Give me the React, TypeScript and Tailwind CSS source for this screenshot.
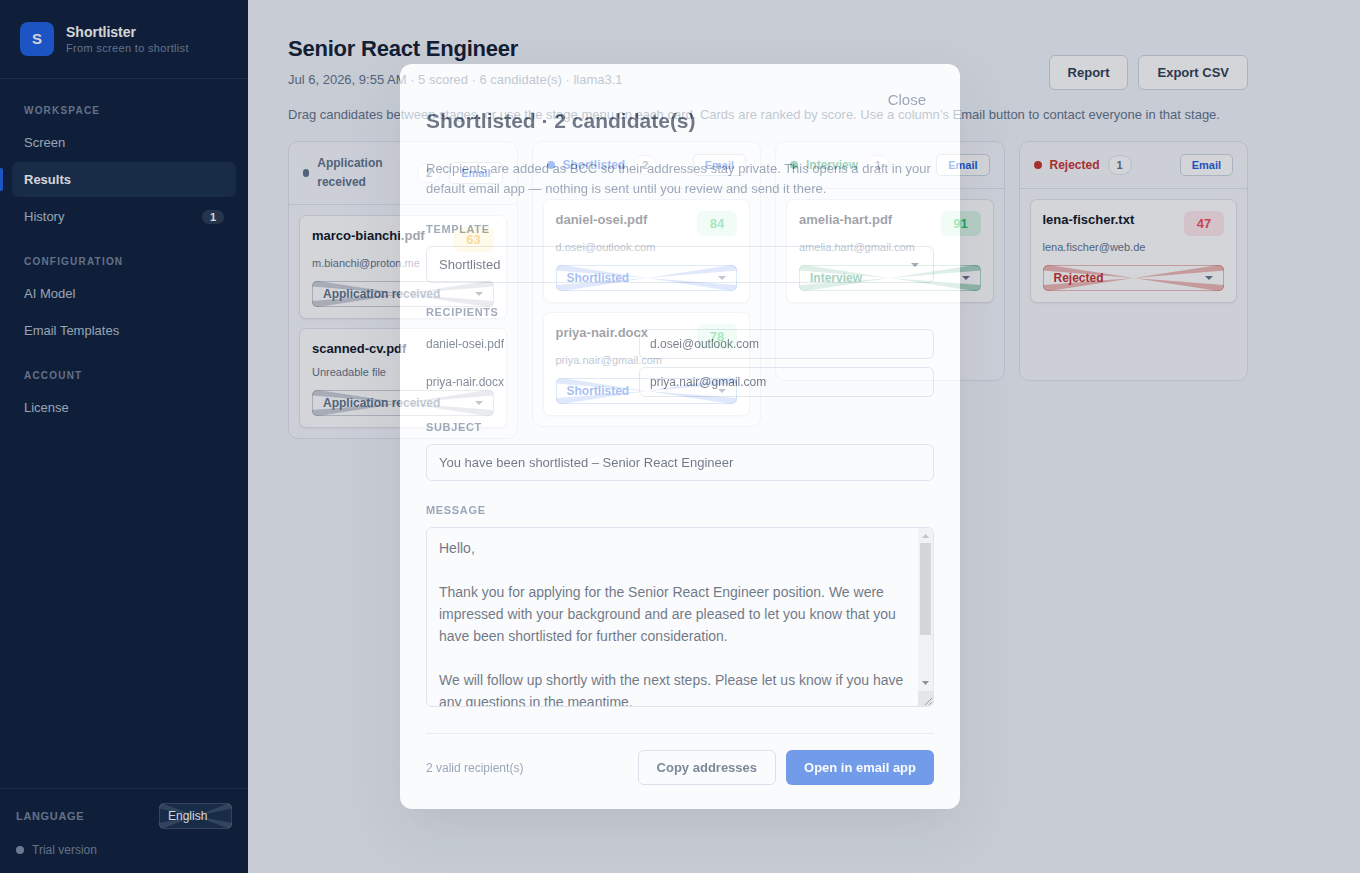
import { useState } from "react";
import clsx from "clsx";

type Stage = "received" | "shortlisted" | "interview" | "rejected";

interface Candidate {
  file: string;
  note: string;
  score?: number;
}

const STAGES: Stage[] = ["received", "shortlisted", "interview", "rejected"];

const STAGE_LABEL: Record<Stage, string> = {
  received: "Application received",
  shortlisted: "Shortlisted",
  interview: "Interview",
  rejected: "Rejected",
};

const STAGE_TEXT: Record<Stage, string> = {
  received: "text-slate-500",
  shortlisted: "text-[#1f5fe0]",
  interview: "text-[#15915a]",
  rejected: "text-[#c93434]",
};

const BOARD: Record<Stage, Candidate[]> = {
  received: [
    { file: "marco-bianchi.pdf", note: "m.bianchi@proton.me", score: 63 },
    { file: "scanned-cv.pdf", note: "Unreadable file" },
  ],
  shortlisted: [
    { file: "daniel-osei.pdf", note: "d.osei@outlook.com", score: 84 },
    { file: "priya-nair.docx", note: "priya.nair@gmail.com", score: 78 },
  ],
  interview: [{ file: "amelia-hart.pdf", note: "amelia.hart@gmail.com", score: 91 }],
  rejected: [{ file: "lena-fischer.txt", note: "lena.fischer@web.de", score: 47 }],
};

const NAV = [
  { title: "Workspace", items: ["Screen", "Results", "History"] },
  { title: "Configuration", items: ["AI Model", "Email Templates"] },
  { title: "Account", items: ["License"] },
];

const MESSAGE = `Hello,

Thank you for applying for the Senior React Engineer position. We were impressed with your background and are pleased to let you know that you have been shortlisted for further consideration.

We will follow up shortly with the next steps. Please let us know if you have any questions in the meantime.

Best regards,
The hiring team`;

function scoreClass(score: number) {
  if (score >= 75) return "bg-[#dcf7e8] text-[#22c55e]";
  if (score >= 50) return "bg-[#fef3c7] text-[#f59e0b]";
  return "bg-[#ffe8ed] text-[#ef4f5f]";
}

function Caret({ className }: { className?: string }) {
  return (
    <svg
      viewBox="0 0 8 4"
      className={clsx("pointer-events-none absolute top-1/2 h-1 w-2 -translate-y-1/2", className)}
      aria-hidden="true"
    >
      <path d="M0 0h8L4 4z" fill="currentColor" />
    </svg>
  );
}

// four wedges running from the corners to the middle of a select
function Rays({ className }: { className?: string }) {
  return (
    <svg
      viewBox="0 0 180 26"
      preserveAspectRatio="none"
      className={clsx("pointer-events-none absolute inset-0 h-full w-full", className)}
      aria-hidden="true"
    >
      <path
        d="M0 0H6L90 13L0 5.500zM0 26H6L90 13L0 20zM180 0H174L90 13L180 5.500zM180 26H174L90 13L180 20z"
        fill="currentColor"
      />
    </svg>
  );
}

// scroll track and resize grip for the message box
function ScrollTrack() {
  return (
    <div
      className="pointer-events-none absolute inset-y-px right-px flex w-[15px] flex-col overflow-hidden rounded-r-[5px] bg-[#f1f1f1]"
      aria-hidden="true"
    >
      <svg viewBox="0 0 15 15" className="h-[15px] w-[15px]">
        <path d="M4 10h7L7.500 6z" fill="#a3a3a3" />
      </svg>
      <div className="mx-[2px] h-[92px] bg-[#c1c1c1]" />
      <svg viewBox="0 0 15 15" className="mt-auto h-[15px] w-[15px]">
        <path d="M4 5h7L7.500 9z" fill="#505050" />
      </svg>
      <svg viewBox="0 0 15 15" className="h-[15px] w-[15px] bg-[#dcdcdc]">
        <path d="M7 14L14 7M11 14L14 11" stroke="#606060" />
      </svg>
    </div>
  );
}

function Sidebar() {
  return (
    <aside className="sticky top-0 flex h-screen w-[248px] shrink-0 flex-col bg-[#10223e]">
      <div className="flex items-center gap-3 border-b border-white/8 px-5 py-[22px]">
        <div className="flex h-[34px] w-[34px] items-center justify-center rounded-lg bg-[#1f62e6] text-[15px] font-bold text-white">
          S
        </div>
        <div>
          <div className="text-sm leading-[17px] font-bold text-white">Shortlister</div>
          <div className="text-[11px] leading-[14px] tracking-[0.03em] text-[#76869f]">
            From screen to shortlist
          </div>
        </div>
      </div>

      <nav className="flex-1 px-3 pt-1">
        {NAV.map((section) => (
          <div key={section.title} className="pt-[19px]">
            <h2 className="mb-[6px] px-3 text-[10px] leading-[17px] font-bold tracking-[0.12em] text-[#76869f] uppercase">
              {section.title}
            </h2>
            <div className="flex flex-col gap-[2px]">
              {section.items.map((item) => {
                const active = item === "Results";
                return (
                  <a
                    key={item}
                    href="#"
                    className={clsx(
                      "relative flex h-[35px] items-center justify-between rounded-md px-3 text-[13px]",
                      active ? "bg-[#1a304f] font-bold text-white" : "text-[#b6c2d4]",
                    )}
                  >
                    {active && (
                      <span className="absolute top-[6px] -left-3 h-[23px] w-[3px] rounded-r-xs bg-[#1f62e6]" />
                    )}
                    {item}
                    {item === "History" && (
                      <span className="rounded-full bg-white/12 px-2 text-[11px] leading-[14px] font-bold text-white">
                        1
                      </span>
                    )}
                  </a>
                );
              })}
            </div>
          </div>
        ))}
      </nav>

      <div className="border-t border-white/8 px-4 py-[14px]">
        <div className="flex items-center justify-between">
          <label
            htmlFor="language"
            className="text-[11px] font-bold tracking-[0.06em] text-[#76869f] uppercase"
          >
            Language
          </label>
          <div className="relative h-[26px] w-[73px] overflow-hidden rounded-[5px] bg-[#1a304f]">
            <Rays className="text-white/14" />
            <select
              id="language"
              className="relative h-full w-full appearance-none rounded-[5px] border border-white/14 pl-2 text-xs text-white"
            >
              <option>English</option>
            </select>
          </div>
        </div>
        <div className="mt-3 flex items-center gap-2 text-xs leading-[18px] text-[#76869f]">
          <span className="h-2 w-2 rounded-full bg-[#8291aa]" />
          Trial version
        </div>
      </div>
    </aside>
  );
}

function CandidateCard({ candidate, stage }: { candidate: Candidate; stage: Stage }) {
  return (
    <article className="rounded-[7px] border border-[#dfe4ef] bg-white px-3 py-[11px] shadow-[0_1px_2px_rgba(15,23,42,0.06)]">
      <div className="flex min-h-[21px] items-start justify-between gap-2">
        <h3 className="text-[13px] leading-[18px] font-bold text-slate-900">{candidate.file}</h3>
        {candidate.score !== undefined && (
          <span
            className={clsx(
              "w-10 shrink-0 rounded-md text-center text-[13px] leading-[25px] font-bold",
              scoreClass(candidate.score),
            )}
          >
            {candidate.score}
          </span>
        )}
      </div>
      <p className="mt-[2px] text-[11px] leading-[18px] text-slate-500">{candidate.note}</p>
      <div
        className={clsx(
          "relative mt-[9px] h-[26px] overflow-hidden rounded-[5px]",
          STAGE_TEXT[stage],
        )}
      >
        <Rays className="opacity-35" />
        <select
          aria-label={`Stage of ${candidate.file}`}
          defaultValue={stage}
          className="relative h-full w-full appearance-none rounded-[5px] border border-current/35 pl-[10px] text-xs font-bold"
        >
          {STAGES.map((s) => (
            <option key={s} value={s}>
              {STAGE_LABEL[s]}
            </option>
          ))}
        </select>
        <Caret className="right-[11px] text-slate-500" />
      </div>
    </article>
  );
}

function Column({ stage }: { stage: Stage }) {
  const candidates = BOARD[stage];
  return (
    <section className="min-h-[240px] rounded-[10px] border border-[#dde2ee] bg-[#f6f8fd]">
      <header className="flex items-center justify-between gap-2 border-b border-[#dde2ee] px-[14px] py-3">
        <div className={clsx("flex min-w-0 items-center gap-2", STAGE_TEXT[stage])}>
          <span className="h-2 w-2 rounded-full bg-current" />
          <h2 className="text-xs leading-[19px] font-bold">{STAGE_LABEL[stage]}</h2>
          <span className="shrink-0 rounded-full border border-[#dde2ee] bg-white px-2 text-[11px] leading-[18px] font-bold text-slate-500">
            {candidates.length}
          </span>
        </div>
        <button
          type="button"
          className="h-[22px] shrink-0 rounded-[5px] border border-slate-300 bg-white px-[11px] text-[11px] font-bold text-[#1f5fe0]"
        >
          Email
        </button>
      </header>
      <div className="flex flex-col gap-[9px] p-[10px]">
        {candidates.map((c) => (
          <CandidateCard key={c.file} candidate={c} stage={stage} />
        ))}
      </div>
    </section>
  );
}

const label = "mb-2 block text-[11px] leading-[17px] font-bold tracking-[0.06em] text-slate-500 uppercase";
const field = "block w-full rounded-md border border-[#d3dae6] bg-white px-3 text-[#1a2639]";
const ghostButton =
  "h-[35px] rounded-md border border-slate-300 bg-white px-[18px] text-[13px] font-bold text-slate-700";

function EmailDialog() {
  const [subject, setSubject] = useState("You have been shortlisted – Senior React Engineer");
  const [message, setMessage] = useState(MESSAGE);

  return (
    <div className="fixed inset-0 flex items-center justify-center bg-slate-900/30 opacity-60">
      <div
        role="dialog"
        aria-labelledby="dialog-title"
        className="w-full max-w-[560px] rounded-xl bg-white px-[26px] pt-[26px] pb-6 shadow-[0_20px_60px_rgba(15,23,42,0.18)]"
      >
        <div className="flex items-start justify-between">
          <h2 id="dialog-title" className="mt-[18px] text-[21px] leading-[26px] font-bold text-[#1a2639]">
            Shortlisted · 2 candidate(s)
          </h2>
          <button type="button" className="px-2 text-[15px] leading-5 text-slate-500">
            Close
          </button>
        </div>
        <p className="mt-[25px] text-[13px] leading-5 text-slate-500">
          Recipients are added as BCC so their addresses stay private. This opens a draft in your
          default email app — nothing is sent until you review and send it there.
        </p>

        <div className="mt-[22px] flex flex-col gap-[21px]">
          <div>
            <label htmlFor="template" className={label}>
              Template
            </label>
            <div className="relative">
              <select id="template" className={clsx(field, "h-[37px] appearance-none text-[13px]")}>
                <option>Shortlisted</option>
              </select>
              <Caret className="right-[15px] text-slate-500" />
            </div>
          </div>

          <div className="pb-px">
            <h3 className={label}>Recipients</h3>
            <div className="flex flex-col gap-2">
              {BOARD.shortlisted.map((c) => (
                <div key={c.file} className="grid grid-cols-[205fr_295fr] items-center gap-2">
                  <label htmlFor={c.file} className="text-xs text-slate-700">
                    {c.file}
                  </label>
                  <input
                    id={c.file}
                    type="email"
                    defaultValue={c.note}
                    className="h-[30px] w-full rounded-md border border-[#d3dae6] bg-white px-[10px] text-xs text-[#1a2639]"
                  />
                </div>
              ))}
            </div>
          </div>

          <div>
            <label htmlFor="subject" className={label}>
              Subject
            </label>
            <input
              id="subject"
              value={subject}
              onChange={(e) => setSubject(e.target.value)}
              className={clsx(field, "h-[37px] text-[13px]")}
            />
          </div>

          <div>
            <label htmlFor="message" className={label}>
              Message
            </label>
            <div className="relative">
              <textarea
                id="message"
                value={message}
                onChange={(e) => setMessage(e.target.value)}
                className={clsx(field, "h-[180px] resize-none py-[9px] pr-[27px] text-sm leading-[22px]")}
              />
              <ScrollTrack />
            </div>
          </div>
        </div>

        <footer className="mt-[26px] flex items-center justify-between border-t border-slate-200 pt-4">
          <span className="text-xs text-slate-500">2 valid recipient(s)</span>
          <div className="flex gap-[10px]">
            <button type="button" className={ghostButton}>
              Copy addresses
            </button>
            <button
              type="button"
              className="h-[35px] rounded-md bg-[#1f5fe0] px-[18px] text-[13px] font-bold text-white"
            >
              Open in email app
            </button>
          </div>
        </footer>
      </div>
    </div>
  );
}

export default function App() {
  return (
    <div className="flex min-h-screen bg-[#f1f5fa] font-['Liberation_Sans',Arial,sans-serif]">
      <Sidebar />
      <main className="max-w-[1040px] min-w-0 flex-1 px-10 py-9">
        <div className="flex items-end justify-between gap-4">
          <div>
            <h1 className="text-[22px] leading-[26px] font-bold tracking-[-0.01em] text-[#142136]">
              Senior React Engineer
            </h1>
            <p className="mt-[7px] text-[13px] leading-[21px] text-slate-500">
              Jul 6, 2026, 9:55 AM · 5 scored · 6 candidate(s) · llama3.1
            </p>
          </div>
          <div className="flex gap-[10px]">
            <button type="button" className={ghostButton}>
              Report
            </button>
            <button type="button" className={ghostButton}>
              Export CSV
            </button>
          </div>
        </div>
        <p className="mt-[15px] mb-4 text-[13px] leading-5 text-slate-500">
          Drag candidates between stages, or use the stage menu on each card. Cards are ranked by
          score. Use a column’s Email button to contact everyone in that stage.
        </p>
        <div className="grid grid-cols-4 items-start gap-[14px]">
          {STAGES.map((stage) => (
            <Column key={stage} stage={stage} />
          ))}
        </div>
      </main>
      <EmailDialog />
    </div>
  );
}
